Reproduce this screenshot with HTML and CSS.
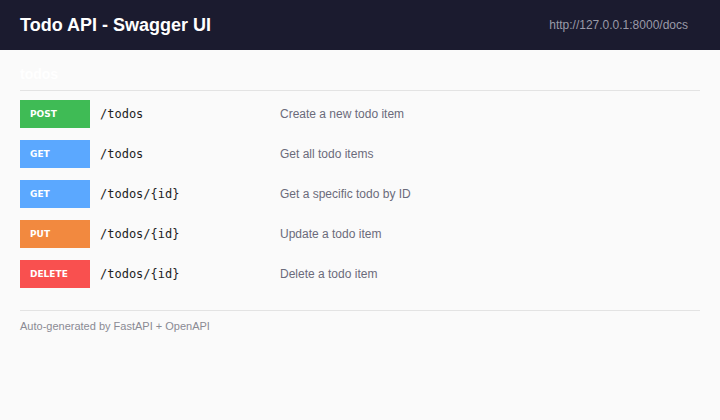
FILE: index.html
```html
<!DOCTYPE html>
<html>
<head>
<meta charset="utf-8">
<link rel="stylesheet" href="styles.css">
</head>
<body>
<header class="topbar">
  <h1 class="title">Todo API - Swagger UI</h1>
  <span class="url">http://127.0.0.1:8000/docs</span>
</header>
<main class="content">
  <h2 class="tag">todos</h2>
  <div class="ops">
    <div class="op"><span class="method post">POST</span><span class="path">/todos</span><span class="desc">Create a new todo item</span></div>
    <div class="op"><span class="method get">GET</span><span class="path">/todos</span><span class="desc">Get all todo items</span></div>
    <div class="op"><span class="method get">GET</span><span class="path">/todos/{id}</span><span class="desc">Get a specific todo by ID</span></div>
    <div class="op"><span class="method put">PUT</span><span class="path">/todos/{id}</span><span class="desc">Update a todo item</span></div>
    <div class="op"><span class="method delete">DELETE</span><span class="path">/todos/{id}</span><span class="desc">Delete a todo item</span></div>
  </div>
  <footer class="foot">Auto-generated by FastAPI + OpenAPI</footer>
</main>
</body>
</html>
```
FILE: styles.css
```css
html, body { margin: 0; padding: 0; }
body {
  background: #fafafa;
  font-family: "Liberation Sans", Arial, sans-serif;
  width: 720px;
  height: 420px;
  overflow: hidden;
}
.topbar {
  height: 50px;
  background: #1b1b2f;
  display: flex;
  align-items: center;
  justify-content: space-between;
  padding: 0 32px 0 20px;
}
.title {
  margin: 0;
  color: #ffffff;
  font-size: 18px;
  font-weight: bold;
}
.url {
  color: #9a9aa8;
  font-size: 12px;
}
.content {
  padding: 0 20px;
}
.tag {
  margin: 0;
  height: 41px;
  box-sizing: border-box;
  padding-top: 16px;
  font-size: 14px;
  line-height: 16px;
  font-weight: bold;
  color: #ffffff;
  border-bottom: 1px solid #e3e3e3;
}
.ops {
  display: flex;
  flex-direction: column;
  gap: 12px;
  padding-top: 9px;
}
.op {
  display: flex;
  align-items: center;
  height: 28px;
}
.method {
  width: 70px;
  height: 28px;
  box-sizing: border-box;
  padding-left: 10px;
  display: flex;
  align-items: center;
  color: #ffffff;
  font-family: "DejaVu Sans", sans-serif;
  font-weight: bold;
  font-size: 9px;
}
.post { background: #3fbb55; }
.get { background: #5ba8ff; }
.put { background: #f2893f; }
.delete { background: #f9504f; }
.path {
  width: 180px;
  padding-left: 10px;
  font-family: "DejaVu Sans Mono", monospace;
  font-size: 12px;
  color: #222222;
}
.desc {
  font-size: 12px;
  color: #6b6b7b;
}
.foot {
  margin-top: 22px;
  border-top: 1px solid #e3e3e3;
  padding-top: 9px;
  font-size: 11px;
  color: #8a8a94;
}
```
